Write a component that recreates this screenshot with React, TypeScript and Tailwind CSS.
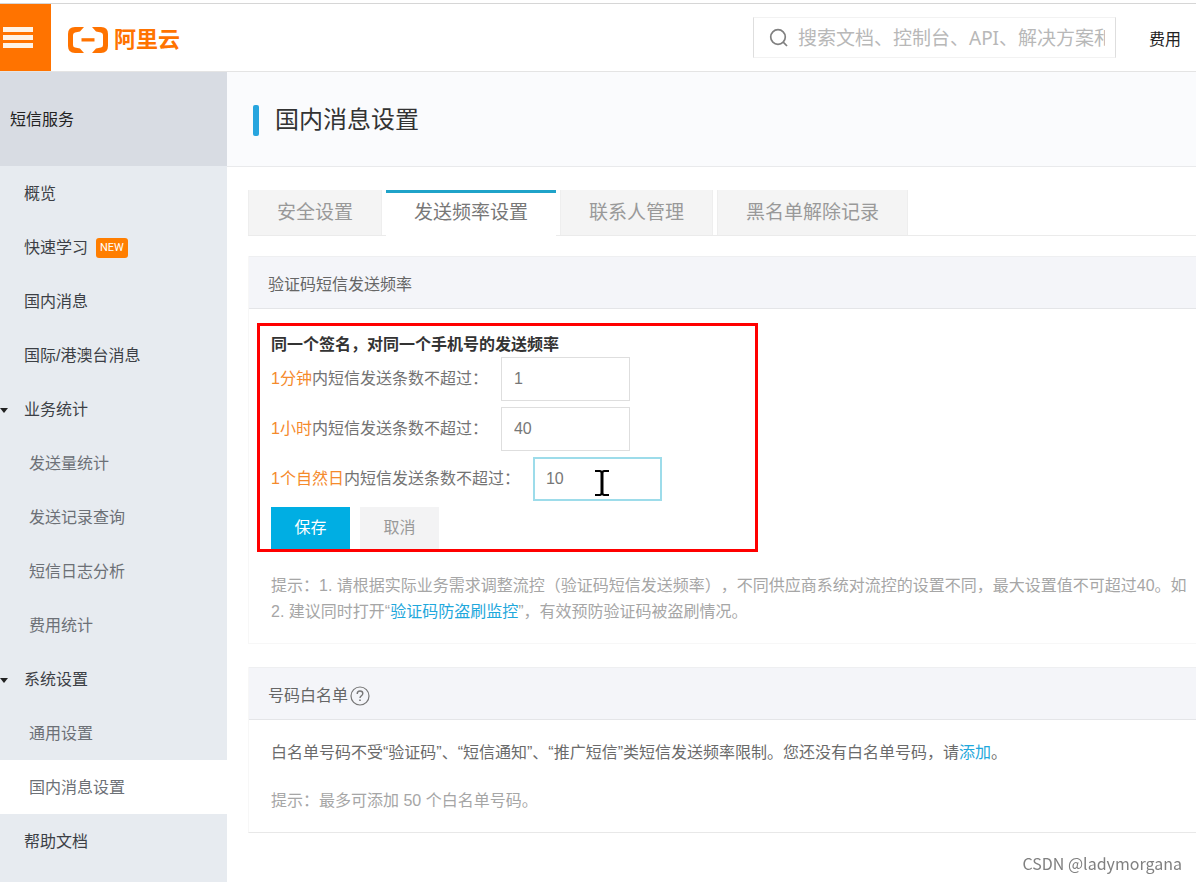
import React, { useState } from "react";
import { clsx, type ClassValue } from "clsx";
import { twMerge } from "tailwind-merge";

/**
 * Utility for merging Tailwind CSS classes without conflicts.
 */
function cn(...inputs: ClassValue[]) {
  return twMerge(clsx(inputs));
}

interface NavItem {
  label: string;
  kind: "link" | "group" | "sub";
  badge?: string;
}

const NAV_ITEMS: NavItem[] = [
  { label: "概览", kind: "link" },
  { label: "快速学习", kind: "link", badge: "NEW" },
  { label: "国内消息", kind: "link" },
  { label: "国际/港澳台消息", kind: "link" },
  { label: "业务统计", kind: "group" },
  { label: "发送量统计", kind: "sub" },
  { label: "发送记录查询", kind: "sub" },
  { label: "短信日志分析", kind: "sub" },
  { label: "费用统计", kind: "sub" },
  { label: "系统设置", kind: "group" },
  { label: "通用设置", kind: "sub" },
  { label: "国内消息设置", kind: "sub" },
  { label: "帮助文档", kind: "link" },
];

const TABS = ["安全设置", "发送频率设置", "联系人管理", "黑名单解除记录"];

const Logo = () => (
  <a href="#" className="ml-[17px] flex items-center gap-[6px] pt-1 text-[#ff7300]">
    <svg width="40" height="26" viewBox="0 0 40 26" fill="currentColor" aria-hidden="true">
      <path d="M16 0H7Q0 0 0 7v12q0 7 7 7h9l-4-4.500-5-1q-2-.5-2-2.500V8q0-2 2-2.500l5-1z" />
      <path d="M24 0h9q7 0 7 7v12q0 7-7 7h-9l4-4.500 5-1q2-.5 2-2.500V8q0-2-2-2.500l-5-1z" />
      <path d="M13.500 11.200h13v3.300h-13z" />
    </svg>
    <span className="text-[22px] leading-7 font-bold">阿里云</span>
  </a>
);

const SearchIcon = () => (
  <svg
    width="20"
    height="20"
    viewBox="0 0 20 20"
    fill="none"
    stroke="#808080"
    strokeWidth="1.700"
    className="shrink-0"
    aria-hidden="true"
  >
    <circle cx="9" cy="9" r="7.300" />
    <path d="M14.200 14.200 18 18" />
  </svg>
);

const Header = () => (
  <header className="border-b border-[#e4e4e4] bg-white pt-[3px]">
    <div className="flex h-[68px] items-center border-t border-[#d6d6d6]">
      <button
        type="button"
        aria-label="菜单"
        className="flex h-full w-[51px] shrink-0 flex-col justify-center gap-[3px] bg-[#ff7300] pl-[3px]"
      >
        <span className="h-[5px] w-[30px] bg-[#fff3e6]" />
        <span className="h-[5px] w-[30px] bg-[#fff3e6]" />
        <span className="h-[5px] w-[30px] bg-[#fff3e6]" />
      </button>
      <Logo />
      <label className="mr-[33px] ml-auto flex h-[41px] w-[363px] items-center gap-[9px] border border-x-[#dedede] border-y-[#f2f2f2] pr-[10px] pl-[15px]">
        <SearchIcon />
        <input
          type="text"
          aria-label="搜索"
          placeholder="搜索文档、控制台、API、解决方案和资源"
          className="h-full min-w-0 flex-1 bg-transparent font-['Noto_Sans','Noto_Sans_CJK_SC',sans-serif] text-[19px] outline-none placeholder:text-[#b8b8b8]"
        />
      </label>
      <a href="#" className="mr-[15px] shrink-0 pt-1 text-base text-[#222]">
        费用
      </a>
    </div>
  </header>
);

const Sidebar = () => (
  <nav className="w-[227px] shrink-0 bg-[#e7ebf0]">
    <h2 className="flex h-[94px] items-center bg-[#d8dce3] pt-[2px] pl-[10px] text-base text-[#222]">
      短信服务
    </h2>
    <ul>
      {NAV_ITEMS.map((item) => (
        <li key={item.label}>
          <a
            href="#"
            className={cn(
              "flex h-[54px] items-center pt-[2px] text-base text-[#3c3f45]",
              item.kind === "link" && "pl-6",
              item.kind === "sub" && "pl-[29px] text-[#6c7076]",
              item.label === "国内消息设置" && "bg-white"
            )}
          >
            {item.kind === "group" && (
              <svg width="8" height="5" viewBox="0 0 8 5" className="mr-4" aria-hidden="true">
                <path d="M0 0h8L4 5z" fill="#222" />
              </svg>
            )}
            {item.label}
            {item.badge && (
              <span className="ml-2 rounded-[3px] bg-[#ff7e00] px-1 font-[Roboto,sans-serif] text-[11px] leading-5 text-white">
                {item.badge}
              </span>
            )}
          </a>
        </li>
      ))}
    </ul>
  </nav>
);

interface CardProps {
  title: React.ReactNode;
  className?: string;
  children: React.ReactNode;
}

const Card = ({ title, className, children }: CardProps) => (
  <section className={cn("border-b border-l border-[#f7f7f7]", className)}>
    <h3 className="flex h-[53px] items-center gap-[2px] border-t border-b border-t-[#eeeff1] border-b-[#e4e5e8] bg-[#f4f5f9] pt-1 pl-[19px] text-base text-[#666]">
      {title}
    </h3>
    {children}
  </section>
);

interface LimitFieldProps {
  id: string;
  period: string;
  value: string;
  onChange: (value: string) => void;
  focused?: boolean;
}

const LimitField = ({ id, period, value, onChange, focused }: LimitFieldProps) => (
  <div className="flex h-11 items-center gap-[13px]">
    <label htmlFor={id} className="text-base text-[#737373]">
      <span className="text-[#f58a2c]">{period}</span>内短信发送条数不超过：
    </label>
    <div className="relative">
      <input
        id={id}
        type="text"
        value={value}
        onChange={(e) => onChange(e.target.value)}
        className={cn(
          "block h-11 w-[129px] border border-[#dedede] bg-white px-3 text-base text-[#777] outline-none",
          focused && "border-2 border-[#9ddcea] px-[11px]"
        )}
      />
      {/* text cursor hovering over the field */}
      {focused && (
        <svg
          width="16"
          height="28"
          viewBox="0 0 16 28"
          className="pointer-events-none absolute top-3 left-[61px]"
          fill="none"
          stroke="#000"
          strokeWidth="2"
          aria-hidden="true"
        >
          <path d="M1 2h5l2 1 2-1h5M1 26h5l2-1 2 1h5" />
          <path d="M8 2v24" strokeWidth="3" />
        </svg>
      )}
    </div>
  </div>
);

const FrequencyForm = () => {
  const [limits, setLimits] = useState({ minute: "1", hour: "40", day: "10" });

  return (
    <form
      onSubmit={(e) => e.preventDefault()}
      className="mt-[14px] ml-2 w-[501px] border-3 border-[#f00] pt-[7px] pl-[11px]"
    >
      <h4 className="text-base leading-6 font-bold text-[#333]">
        同一个签名，对同一个手机号的发送频率
      </h4>
      <div className="flex flex-col gap-[6px]">
        <LimitField
          id="limit-minute"
          period="1分钟"
          value={limits.minute}
          onChange={(minute) => setLimits({ ...limits, minute })}
        />
        <LimitField
          id="limit-hour"
          period="1小时"
          value={limits.hour}
          onChange={(hour) => setLimits({ ...limits, hour })}
        />
        <LimitField
          id="limit-day"
          period="1个自然日"
          value={limits.day}
          onChange={(day) => setLimits({ ...limits, day })}
          focused
        />
        <div className="flex gap-[10px]">
          <button type="submit" className="h-[42px] w-[79px] bg-[#00aee3] text-base text-white">
            保存
          </button>
          <button type="button" className="h-[42px] w-[79px] bg-[#f3f3f4] text-base text-[#999]">
            取消
          </button>
        </div>
      </div>
    </form>
  );
};

const Tabs = () => {
  const [active, setActive] = useState(TABS[1]);

  return (
    <div role="tablist" className="flex h-[46px] gap-1 border-b border-[#ebebeb]">
      {TABS.map((tab) => (
        <button
          key={tab}
          type="button"
          role="tab"
          aria-selected={tab === active}
          onClick={() => setActive(tab)}
          className={cn(
            "shrink-0 px-7 text-[19px]",
            tab === active
              ? "-mb-px border-t-3 border-[#1fa3c9] bg-white pb-[2px] text-[#777]"
              : "border-x border-[#eeeeee] bg-[#f4f4f4] pt-[2px] text-[#999]"
          )}
        >
          {tab}
        </button>
      ))}
    </div>
  );
};

export default function App() {
  return (
    <div className="flex min-h-screen flex-col overflow-hidden bg-white font-['Liberation_Sans','Noto_Sans_CJK_SC',sans-serif] [text-spacing-trim:space-all]">
      <Header />
      <div className="flex flex-1">
        <Sidebar />
        <main className="min-w-0 flex-1">
          <div className="flex h-[95px] items-center gap-4 border-b border-[#e9eaec] bg-[#fafbfd] pt-[2px] pl-[26px]">
            <span className="h-[31px] w-[6px] rounded-[2px] bg-[#27a5de]" />
            <h1 className="text-2xl text-[#333]">国内消息设置</h1>
          </div>

          <div className="pt-[23px] pl-[21px]">
            <Tabs />

            <Card title="验证码短信发送频率" className="mt-5 pb-[18px]">
              <FrequencyForm />
              <div className="mt-[21px] overflow-hidden pl-[22px] text-base leading-[26px] whitespace-nowrap text-[#a6a6a6]">
                <p>
                  提示：1. 请根据实际业务需求调整流控（验证码短信发送频率），不同供应商系统对流控的设置不同，最大设置值不可超过40。如
                </p>
                <p>
                  2. 建议同时打开“
                  <a href="#" className="text-[#1fa8dc]">
                    验证码防盗刷监控
                  </a>
                  ”，有效预防验证码被盗刷情况。
                </p>
              </div>
            </Card>

            <Card
              className="mt-[23px] border-b-[#e8e8e8] pb-[19px]"
              title={
                <>
                  号码白名单
                  <svg width="20" height="20" viewBox="0 0 20 20" fill="none" stroke="#777" aria-hidden="true">
                    <circle cx="10" cy="10" r="9" strokeWidth="1.200" />
                    <path d="M7.200 8q0-3 2.800-3t2.800 2.600q0 1.400-1.500 2.200-1.300.7-1.300 2.200" strokeWidth="1.400" />
                    <path d="M10 13.500v1.600" strokeWidth="1.600" />
                  </svg>
                </>
              }
            >
              <div className="overflow-hidden pt-[21px] pl-[22px] text-base leading-6 whitespace-nowrap">
                <p className="text-[#6b6b6b]">
                  白名单号码不受“验证码”、“短信通知”、“推广短信”类短信发送频率限制。您还没有白名单号码，请
                  <a href="#" className="text-[#1fa8dc]">
                    添加
                  </a>
                  。
                </p>
                <p className="mt-6 text-[#a6a6a6]">提示：最多可添加 50 个白名单号码。</p>
              </div>
            </Card>
          </div>
        </main>
      </div>

      {/* Watermark */}
      <div className="pointer-events-none fixed right-[14px] bottom-[7px] font-['Noto_Sans_CJK_SC',sans-serif] text-base text-[#808080]">
        CSDN @ladymorgana
      </div>
    </div>
  );
}
